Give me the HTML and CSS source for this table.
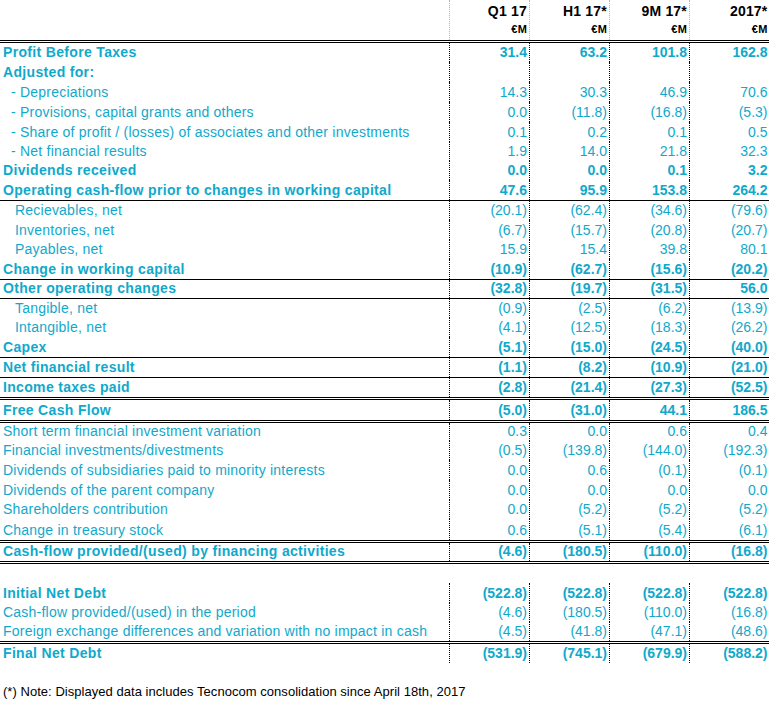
FILE: index.html
```html
<!DOCTYPE html>
<html>
<head>
<meta charset="utf-8">
<link rel="stylesheet" href="styles.css">
</head>
<body>
<div class="sheet">
  <div class="row hdr dbl">
    <div class="c lab"></div>
    <div class="c num"><div class="t1">Q1 17</div><div class="t2">€M</div></div>
    <div class="c num"><div class="t1">H1 17*</div><div class="t2">€M</div></div>
    <div class="c num"><div class="t1">9M 17*</div><div class="t2">€M</div></div>
    <div class="c num"><div class="t1">2017*</div><div class="t2">€M</div></div>
  </div>

  <div class="row b h19"><div class="c lab">Profit Before Taxes</div><div class="c num">31.4</div><div class="c num">63.2</div><div class="c num">101.8</div><div class="c num">162.8</div></div>
  <div class="row b h20"><div class="c lab">Adjusted for:</div><div class="c num"></div><div class="c num"></div><div class="c num"></div><div class="c num"></div></div>
  <div class="row h20"><div class="c lab ind1">- Depreciations</div><div class="c num">14.3</div><div class="c num">30.3</div><div class="c num">46.9</div><div class="c num">70.6</div></div>
  <div class="row h20"><div class="c lab ind1">- Provisions, capital grants and others</div><div class="c num">0.0</div><div class="c num">(11.8)</div><div class="c num">(16.8)</div><div class="c num">(5.3)</div></div>
  <div class="row h20"><div class="c lab ind1">- Share of profit / (losses) of associates and other investments</div><div class="c num">0.1</div><div class="c num">0.2</div><div class="c num">0.1</div><div class="c num">0.5</div></div>
  <div class="row h19"><div class="c lab ind1">- Net financial results</div><div class="c num">1.9</div><div class="c num">14.0</div><div class="c num">21.8</div><div class="c num">32.3</div></div>
  <div class="row b h19"><div class="c lab">Dividends received</div><div class="c num">0.0</div><div class="c num">0.0</div><div class="c num">0.1</div><div class="c num">3.2</div></div>
  <div class="row b h20 line"><div class="c lab">Operating cash-flow prior to changes in working capital</div><div class="c num">47.6</div><div class="c num">95.9</div><div class="c num">153.8</div><div class="c num">264.2</div></div>

  <div class="row h19"><div class="c lab ind2">Recievables, net</div><div class="c num">(20.1)</div><div class="c num">(62.4)</div><div class="c num">(34.6)</div><div class="c num">(79.6)</div></div>
  <div class="row h20"><div class="c lab ind2">Inventories, net</div><div class="c num">(6.7)</div><div class="c num">(15.7)</div><div class="c num">(20.8)</div><div class="c num">(20.7)</div></div>
  <div class="row h19"><div class="c lab ind2">Payables, net</div><div class="c num">15.9</div><div class="c num">15.4</div><div class="c num">39.8</div><div class="c num">80.1</div></div>
  <div class="row b h20 line"><div class="c lab">Change in working capital</div><div class="c num">(10.9)</div><div class="c num">(62.7)</div><div class="c num">(15.6)</div><div class="c num">(20.2)</div></div>
  <div class="row b h18 line"><div class="c lab">Other operating changes</div><div class="c num">(32.8)</div><div class="c num">(19.7)</div><div class="c num">(31.5)</div><div class="c num">56.0</div></div>

  <div class="row h19"><div class="c lab ind2">Tangible, net</div><div class="c num">(0.9)</div><div class="c num">(2.5)</div><div class="c num">(6.2)</div><div class="c num">(13.9)</div></div>
  <div class="row h19"><div class="c lab ind2">Intangible, net</div><div class="c num">(4.1)</div><div class="c num">(12.5)</div><div class="c num">(18.3)</div><div class="c num">(26.2)</div></div>
  <div class="row b h20 line"><div class="c lab">Capex</div><div class="c num">(5.1)</div><div class="c num">(15.0)</div><div class="c num">(24.5)</div><div class="c num">(40.0)</div></div>
  <div class="row b h19 line"><div class="c lab">Net financial result</div><div class="c num">(1.1)</div><div class="c num">(8.2)</div><div class="c num">(10.9)</div><div class="c num">(21.0)</div></div>
  <div class="row b h19 dbl"><div class="c lab">Income taxes paid</div><div class="c num">(2.8)</div><div class="c num">(21.4)</div><div class="c num">(27.3)</div><div class="c num">(52.5)</div></div>
  <div class="row b h20 dbl"><div class="c lab">Free Cash Flow</div><div class="c num">(5.0)</div><div class="c num">(31.0)</div><div class="c num">44.1</div><div class="c num">186.5</div></div>

  <div class="row h18"><div class="c lab">Short term financial investment variation</div><div class="c num">0.3</div><div class="c num">0.0</div><div class="c num">0.6</div><div class="c num">0.4</div></div>
  <div class="row h19"><div class="c lab">Financial investments/divestments</div><div class="c num">(0.5)</div><div class="c num">(139.8)</div><div class="c num">(144.0)</div><div class="c num">(192.3)</div></div>
  <div class="row h20"><div class="c lab">Dividends of subsidiaries paid to minority interests</div><div class="c num">0.0</div><div class="c num">0.6</div><div class="c num">(0.1)</div><div class="c num">(0.1)</div></div>
  <div class="row h20"><div class="c lab">Dividends of the parent company</div><div class="c num">0.0</div><div class="c num">0.0</div><div class="c num">0.0</div><div class="c num">0.0</div></div>
  <div class="row h19"><div class="c lab">Shareholders contribution</div><div class="c num">0.0</div><div class="c num">(5.2)</div><div class="c num">(5.2)</div><div class="c num">(5.2)</div></div>
  <div class="row h21 dbl"><div class="c lab">Change in treasury stock</div><div class="c num">0.6</div><div class="c num">(5.1)</div><div class="c num">(5.4)</div><div class="c num">(6.1)</div></div>
  <div class="row b h18 dbl"><div class="c lab">Cash-flow provided/(used) by financing activities</div><div class="c num">(4.6)</div><div class="c num">(180.5)</div><div class="c num">(110.0)</div><div class="c num">(16.8)</div></div>

  <div class="gap"></div>

  <div class="row b h20"><div class="c lab">Initial Net Debt</div><div class="c num">(522.8)</div><div class="c num">(522.8)</div><div class="c num">(522.8)</div><div class="c num">(522.8)</div></div>
  <div class="row h19"><div class="c lab">Cash-flow provided/(used) in the period</div><div class="c num">(4.6)</div><div class="c num">(180.5)</div><div class="c num">(110.0)</div><div class="c num">(16.8)</div></div>
  <div class="row h19 dbl"><div class="c lab">Foreign exchange differences and variation with no impact in cash</div><div class="c num">(4.5)</div><div class="c num">(41.8)</div><div class="c num">(47.1)</div><div class="c num">(48.6)</div></div>
  <div class="row b h19"><div class="c lab">Final Net Debt</div><div class="c num">(531.9)</div><div class="c num">(745.1)</div><div class="c num">(679.9)</div><div class="c num">(588.2)</div></div>

  <div class="note">(*) Note: Displayed data includes Tecnocom consolidation since April 18th, 2017</div>
</div>
</body>
</html>
```

FILE: styles.css
```css
html, body {
  margin: 0;
  padding: 0;
  background: #ffffff;
}

body {
  font-family: "Liberation Sans", Arial, sans-serif;
  color: #0fa9cc;
}

.sheet {
  width: 769px;
}

.row {
  display: grid;
  grid-template-columns: 450px 80px 80px 80px 79px;
  grid-template-rows: minmax(0, 1fr);
}

.h18 { height: 18px; }
.h19 { height: 19px; }
.h20 { height: 20px; }
.h21 { height: 21px; }

.line { border-bottom: 1px solid #000; }
.dbl { border-bottom: 3px double #000; }

.c {
  display: flex;
  align-items: flex-end;
  box-sizing: border-box;
  min-height: 0;
  padding-bottom: 1px;
  font-size: 14px;
  line-height: 18px;
  white-space: nowrap;
  border-right: 1px dotted #000;
}

.lab {
  padding-left: 3px;
  letter-spacing: 0.22px;
}

.ind1 { padding-left: 11px; }
.ind2 { padding-left: 15px; }

.num {
  justify-content: flex-end;
  padding-right: 2px;
  letter-spacing: 0;
}

.num:last-child {
  border-right: none;
  padding-right: 1.5px;
}

.b .c { font-weight: bold; }
.b .lab { letter-spacing: 0.33px; }
.b .num { letter-spacing: 0; }

.hdr {
  height: 40px;
}

.hdr .c {
  display: block;
  text-align: right;
  color: #000;
  border-right: 1px dotted #b4b4b4;
  padding-bottom: 0;
  font-weight: bold;
}

.hdr .c:last-child {
  border-right: none;
}

.t1 {
  font-size: 14px;
  line-height: 22px;
  letter-spacing: 0.2px;
}

.t2 {
  font-size: 11px;
  line-height: 14px;
  letter-spacing: 0.2px;
}

.gap {
  height: 19px;
}

.note {
  margin-top: 19px;
  padding-left: 3px;
  font-size: 13px;
  line-height: 20px;
  letter-spacing: 0.04px;
  color: #000;
  white-space: nowrap;
}
```
